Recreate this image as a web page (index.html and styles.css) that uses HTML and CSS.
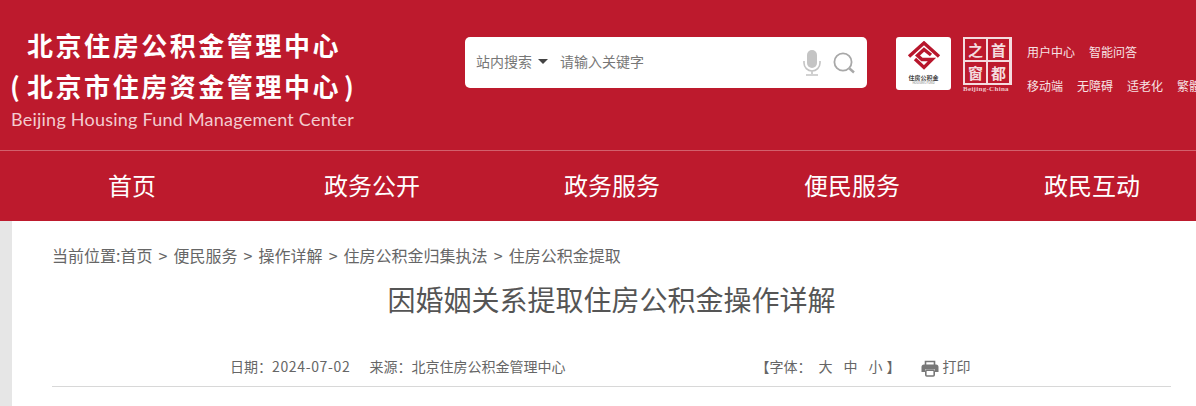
FILE: index.html
```html
<!DOCTYPE html>
<html lang="zh-CN">
<head>
<meta charset="UTF-8">
<meta name="viewport" content="width=device-width, initial-scale=1.0">
<title>因婚姻关系提取住房公积金操作详解</title>
<link rel="stylesheet" href="styles.css">
</head>
<body>
    <header class="topBar">
        <div class="brand">
            <div class="brandLine brandFirst">北京住房公积金管理中心</div>
            <div class="brandLine"><span class="paren">(</span>北京市住房资金管理中心<span class="paren parenEnd">)</span></div>
            <div class="brandEn">Beijing Housing Fund Management Center</div>
        </div>
        <form class="searchBox">
            <span class="searchScope">站内搜索</span>
            <span class="caret"></span>
            <span class="searchHint">请输入关键字</span>
            <svg class="micIcon" width="20" height="26" viewBox="0 0 20 26">
                <rect x="5" y="0" width="10" height="18" rx="5" fill="#c4c4c4"/>
                <path d="M2 11v2a8 8 0 0 0 16 0v-2M10 21v3M4 25h12" fill="none" stroke="#c4c4c4" stroke-width="1.6"/>
            </svg>
            <svg class="findIcon" width="22" height="22" viewBox="0 0 22 22">
                <circle cx="10" cy="10" r="8.6" fill="none" stroke="#a8a8a8" stroke-width="1.8"/>
                <path d="M16.5 16.5l4.5 4" stroke="#a8a8a8" stroke-width="2.4" fill="none"/>
            </svg>
        </form>
        <div class="logoFund">
            <svg width="34" height="31" viewBox="0 0 34 31">
                <g fill="none" stroke="#b8162c" stroke-width="3.4">
                    <path d="M2 15.5L17 2 32 15.5"/>
                    <path d="M24 14L17 8.5 10.5 14.5 15 18.5H25L17 26.5 8 18"/>
                </g>
            </svg>
            <span class="fundName">住房公积金</span>
            <span class="fundSub">HOUSING FUND</span>
        </div>
        <div class="logoCapital">
            <div class="sealGrid">
                <span>之</span><span>首</span><span>窗</span><span>都</span>
            </div>
            <div class="sealEn">Beijing-China</div>
        </div>
        <div class="quickLinks">
            <div class="linkRow linkRowWide">
                <a>用户中心</a><a>智能问答</a>
            </div>
            <div class="linkRow">
                <a>移动端</a><a>无障碍</a><a>适老化</a><a>繁體</a>
            </div>
        </div>
    </header>

    <nav class="mainNav">
        <a>首页</a>
        <a>政务公开</a>
        <a>政务服务</a>
        <a>便民服务</a>
        <a>政民互动</a>
    </nav>

    <main class="content">
        <div class="crumbs">当前位置:首页 &gt; 便民服务 &gt; 操作详解 &gt; 住房公积金归集执法 &gt; 住房公积金提取</div>
        <h1 class="pageTitle">因婚姻关系提取住房公积金操作详解</h1>
        <div class="metaRow">
            <span class="metaDate">日期：<span class="dateNum">2024-07-02</span></span>
            <span class="metaSource">来源：北京住房公积金管理中心</span>
            <span class="metaFont">【字体：<b>大</b><b>中</b><b>小</b>】</span>
            <span class="metaPrint">
                <svg width="18" height="17" viewBox="0 0 18 17">
                    <path d="M4.5 5V1.5h9V5" fill="none" stroke="#777" stroke-width="1.6"/>
                    <path d="M3 4.5h12a2.5 2.5 0 0 1 2.5 2.5v5H14V9.5H4V12H.5V7A2.5 2.5 0 0 1 3 4.5z" fill="#777"/>
                    <rect x="4.8" y="10.3" width="8.4" height="5.7" rx="1" fill="none" stroke="#777" stroke-width="1.6"/>
                </svg>
                打印
            </span>
        </div>
    </main>
</body>
</html>
```

FILE: styles.css
```css
html, body {
    margin: 0;
    height: 406px;
    overflow: hidden;
}

body {
    font-family: "Noto Sans CJK SC", sans-serif;
    background-color: #e6e6e6;
    color: #666;
}

.topBar {
    display: flex;
    align-items: flex-start;
    height: 150px;
    background-color: #bd1a2d;
    border-bottom: 1px solid #d2606c;
    white-space: nowrap;
}

.brand {
    width: 465px;
    flex: none;
    padding-left: 10px;
    box-sizing: border-box;
    color: #fff;
}

.brandLine {
    font-size: 26px;
    font-weight: bold;
    letter-spacing: 2.55px;
    line-height: 41px;
}

.brandFirst {
    margin-top: 24px;
    padding-left: 17px;
}

.paren {
    display: inline-block;
    width: 17px;
    letter-spacing: 0;
}

.parenEnd {
    width: auto;
    margin-left: 3px;
}

.brandEn {
    margin-top: 1px;
    padding-left: 1px;
    font-family: Lato, sans-serif;
    font-size: 18px;
    letter-spacing: 0.23px;
    line-height: 24px;
    color: #f3ccd0;
}

.searchBox {
    display: flex;
    align-items: center;
    flex: none;
    width: 402px;
    height: 51px;
    margin: 37px 29px 0 0;
    padding: 0 12px 0 11px;
    box-sizing: border-box;
    background-color: #fff;
    border-radius: 5px;
    font-size: 14px;
    color: #777;
}

.searchScope, .searchHint {
    margin-bottom: 3px;
}

.caret {
    width: 0;
    height: 0;
    margin: 0 0 3px 6px;
    border: 5px solid transparent;
    border-top: 5px solid #444;
    border-bottom: 0;
}

.searchHint {
    flex: 1;
    margin-left: 12px;
}

.micIcon {
    margin-right: 11px;
}

.logoFund {
    display: flex;
    flex-direction: column;
    align-items: center;
    flex: none;
    width: 55px;
    height: 53px;
    margin: 37px 12px 0 0;
    padding-top: 4px;
    box-sizing: border-box;
    background-color: #fff;
    border-radius: 3px;
}

.fundName {
    margin-top: 2px;
    font-size: 6px;
    font-weight: bold;
    line-height: 7px;
    color: #444;
}

.fundSub {
    font-size: 3px;
    line-height: 4px;
    color: #777;
}

.logoCapital {
    flex: none;
    width: 52px;
    margin: 37px 12px 0 0;
}

.sealGrid {
    display: grid;
    grid-template-columns: 21px 21px;
    grid-template-rows: 21px 21px;
    gap: 2px;
    width: 49px;
    height: 48px;
    padding: 2px;
    box-sizing: border-box;
    background-color: #f4dcdf;
}

.sealGrid span {
    display: flex;
    align-items: center;
    justify-content: center;
    overflow: hidden;
    background-color: #bd1a2d;
    font-size: 15px;
    line-height: 1;
    font-weight: bold;
    color: #f4dcdf;
}

.sealEn {
    font-family: "Liberation Serif", serif;
    font-size: 7px;
    font-weight: bold;
    letter-spacing: 0.3px;
    line-height: 9px;
    color: #f0c8cc;
}

.quickLinks {
    flex: none;
    margin-top: 43px;
    font-size: 12px;
    line-height: 17px;
    color: #f7e3e5;
}

.linkRow {
    display: flex;
    gap: 14px;
}

.linkRowWide {
    margin-bottom: 17px;
}

.mainNav {
    display: grid;
    grid-template-columns: repeat(5, 240px);
    align-items: center;
    height: 67px;
    padding: 0 0 3px 12px;
    background-color: #bd1a2d;
}

.mainNav a {
    text-align: center;
    font-size: 24px;
    color: #fff;
}

.content {
    height: 185px;
    margin-left: 12px;
    padding: 0 25px 0 40px;
    background-color: #fff;
}

.crumbs {
    padding-top: 23px;
    font-size: 16px;
    word-spacing: 2.5px;
    line-height: 23px;
    color: #666;
}

.pageTitle {
    margin: 12px 0 0;
    text-align: center;
    font-size: 28px;
    font-weight: normal;
    line-height: 40px;
    color: #555;
}

.metaRow {
    display: flex;
    align-items: center;
    height: 40px;
    margin-top: 27px;
    padding-left: 178px;
    border-bottom: 1px solid #d8d8d8;
    font-size: 14px;
    color: #666;
}

.dateNum {
    letter-spacing: 0.65px;
}

.metaSource {
    margin-left: 19px;
}

.metaFont {
    margin-left: 190px;
}

.metaFont b {
    margin-right: 11px;
    font-weight: normal;
}

.metaFont b:first-child {
    margin-left: 7px;
}

.metaFont b:last-child {
    margin-right: 4px;
}

.metaPrint {
    display: flex;
    align-items: center;
    gap: 3px;
    margin-left: 21px;
}

.metaPrint svg {
    margin-top: 5px;
}
```
